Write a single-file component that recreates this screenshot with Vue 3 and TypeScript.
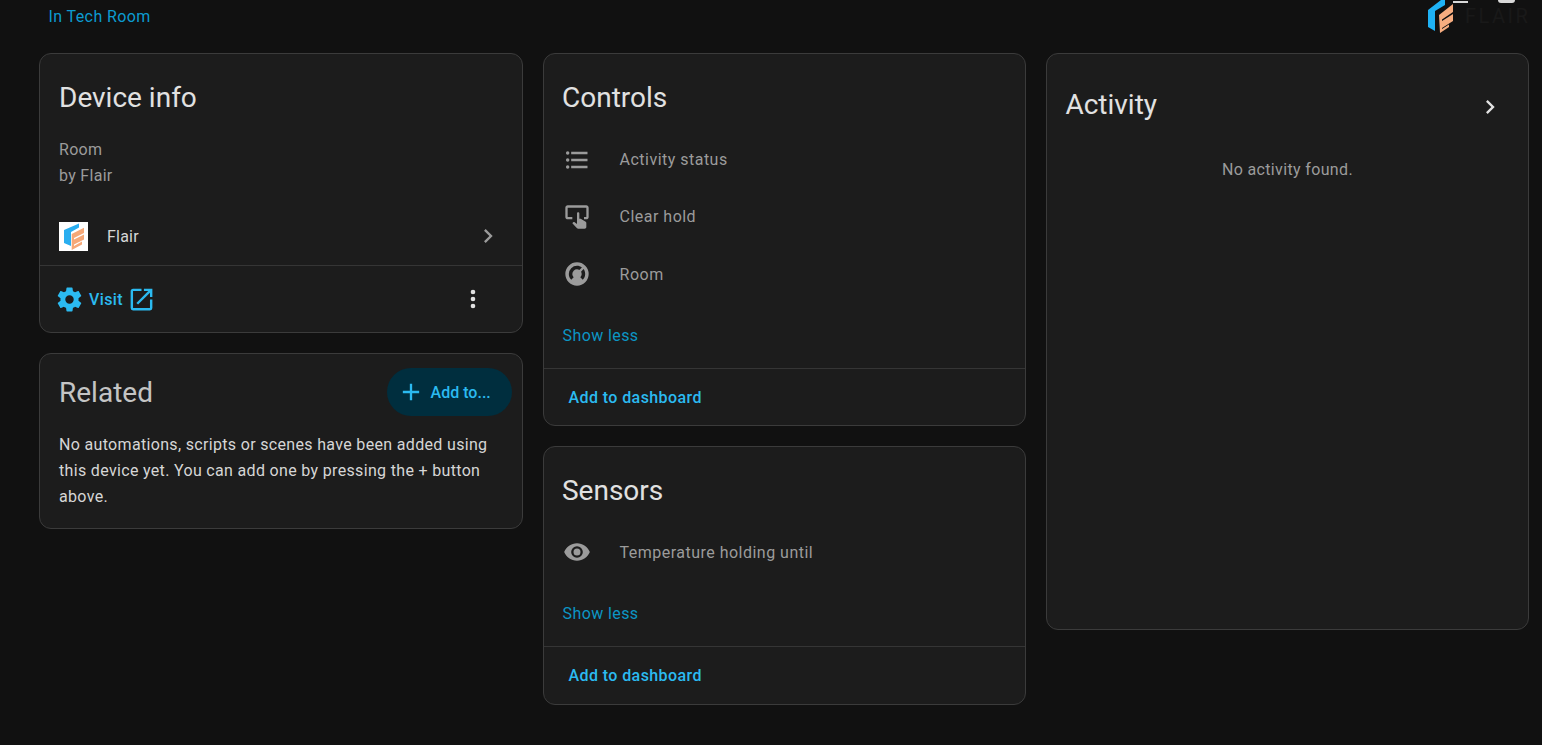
<script setup lang="ts">
const paths = {
  list: 'M7,5H21V7H7V5M7,13V11H21V13H7M4,4.5A1.5,1.5 0 0,1 5.5,6A1.5,1.5 0 0,1 4,7.5A1.5,1.5 0 0,1 2.5,6A1.5,1.5 0 0,1 4,4.5M4,10.5A1.5,1.5 0 0,1 5.5,12A1.5,1.5 0 0,1 4,13.5A1.5,1.5 0 0,1 2.5,12A1.5,1.5 0 0,1 4,10.5M7,19V17H21V19H7M4,16.5A1.5,1.5 0 0,1 5.5,18A1.5,1.5 0 0,1 4,19.5A1.5,1.5 0 0,1 2.5,18A1.5,1.5 0 0,1 4,16.5Z',
  tap: 'M20 2H4C2.9 2 2 2.9 2 4V12C2 13.1 2.9 14 4 14H8V12H4V4H20V12H18V14H20C21.1 14 22 13.1 22 12V4C22 2.9 21.1 2 20 2ZM20 20.5C20 21.3 19.3 22 18.5 22H13C12.6 22 12.3 21.9 12 21.6L8 17.4L8.7 16.6C8.9 16.4 9.2 16.3 9.5 16.3H9.7L12 18V9C12 8.4 12.4 8 13 8S14 8.4 14 9V13.5L15.2 13.6L19.1 15.8C19.7 16 20 16.6 20 17.1V20.5Z',
  thermostat: 'M16.95,16.95L14.83,14.83C15.55,14.1 16,13.1 16,12C16,11.26 15.8,10.57 15.45,10L17.6,7.81C18.5,9.05 19,10.43 19,12C19,13.93 18.22,15.68 16.95,16.95M12,5C13.57,5 14.96,5.5 16.2,6.39L14,8.55C13.43,8.2 12.74,8 12,8A4,4 0 0,0 8,12C8,13.1 8.45,14.1 9.17,14.83L7.05,16.95C5.78,15.68 5,13.93 5,12A7,7 0 0,1 12,5M12,2A10,10 0 0,0 2,12A10,10 0 0,0 12,22A10,10 0 0,0 22,12A10,10 0 0,0 12,2Z',
  eye: 'M12,9A3,3 0 0,0 9,12A3,3 0 0,0 12,15A3,3 0 0,0 15,12A3,3 0 0,0 12,9M12,17A5,5 0 0,1 7,12A5,5 0 0,1 12,7A5,5 0 0,1 17,12A5,5 0 0,1 12,17M12,4.5C7,4.5 2.73,7.61 1,12C2.73,16.39 7,19.5 12,19.5C17,19.5 21.27,16.39 23,12C21.27,7.61 17,4.5 12,4.5Z',
  cog: 'M12,15.5A3.5,3.5 0 0,1 8.5,12A3.5,3.5 0 0,1 12,8.5A3.5,3.5 0 0,1 15.5,12A3.5,3.5 0 0,1 12,15.5M19.43,12.97C19.47,12.65 19.5,12.33 19.5,12C19.5,11.67 19.47,11.34 19.43,11L21.54,9.37C21.73,9.22 21.78,8.95 21.66,8.73L19.66,5.27C19.54,5.05 19.27,4.96 19.05,5.05L16.56,6.05C16.04,5.66 15.5,5.32 14.87,5.07L14.5,2.42C14.46,2.18 14.25,2 14,2H10C9.75,2 9.54,2.18 9.5,2.42L9.13,5.07C8.5,5.32 7.96,5.66 7.44,6.05L4.95,5.05C4.73,4.96 4.46,5.05 4.34,5.27L2.34,8.73C2.21,8.95 2.27,9.22 2.46,9.37L4.57,11C4.53,11.34 4.5,11.67 4.5,12C4.5,12.33 4.53,12.65 4.57,12.97L2.46,14.63C2.27,14.78 2.21,15.05 2.34,15.27L4.34,18.73C4.46,18.95 4.73,19.03 4.95,18.95L7.44,17.94C7.96,18.34 8.5,18.68 9.13,18.93L9.5,21.58C9.54,21.82 9.75,22 10,22H14C14.25,22 14.46,21.82 14.5,21.58L14.87,18.93C15.5,18.67 16.04,18.34 16.56,17.94L19.05,18.95C19.27,19.03 19.54,18.95 19.66,18.73L21.66,15.27C21.78,15.05 21.73,14.78 21.54,14.63L19.43,12.97Z',
  open: 'M14,3V5H17.59L7.76,14.83L9.17,16.24L19,6.41V10H21V3M19,19H5V5H12V3H5C3.89,3 3,3.9 3,5V19A2,2 0 0,0 5,21H19A2,2 0 0,0 21,19V12H19V19Z',
  dots: 'M12,16A2,2 0 0,1 14,18A2,2 0 0,1 12,20A2,2 0 0,1 10,18A2,2 0 0,1 12,16M12,10A2,2 0 0,1 14,12A2,2 0 0,1 12,14A2,2 0 0,1 10,12A2,2 0 0,1 12,10M12,4A2,2 0 0,1 14,6A2,2 0 0,1 12,8A2,2 0 0,1 10,6A2,2 0 0,1 12,4Z',
  chevron: 'M8.59,16.58L13.17,12L8.59,7.41L10,6L16,12L10,18L8.59,16.58Z',
  plus: 'M19,13H13V19H11V13H5V11H11V5H13V11H19V13Z',
}
const controls = [
  { icon: paths.list, label: 'Activity status' },
  { icon: paths.tap, label: 'Clear hold' },
  { icon: paths.thermostat, label: 'Room' },
]
</script>

<template>
  <div class="page">
    <div class="topbar">
      <a class="area">In Tech Room</a>
    </div>
    <div class="brand">
      <span class="stub stub-a"></span>
      <span class="stub stub-b"></span>
      <svg class="brand-logo" viewBox="0 0 28 34" width="28" height="34">
        <polygon points="0,10 13,0 17,0 17,5 7,11 7,31 0,27" fill="#1fb2f5" />
        <polygon points="11,15 25,4 25,12 14,19.5 14,21 25,14 25,21 14,28 14,29 21,24.5 21,27 12,33" fill="#f7ad80" />
      </svg>
      <span class="brand-word">FLAIR</span>
    </div>

    <div class="columns">
      <div class="column">
        <section class="card">
          <h1 class="title">Device info</h1>
          <div class="model">
            <div>Room</div>
            <div>by Flair</div>
          </div>
          <div class="integration">
            <span class="tile">
              <svg viewBox="0 0 29 29" width="29" height="29">
                <polygon points="5,8 20,1.5 20,5.5 12,10 12,24 5,21" fill="#29aef0" />
                <polygon points="12.7,12 25,5.7 25,11 15,16 15,17.5 25,12.5 25,17.5 15,22.5 15,24 23,19.5 23,22.5 12.7,28" fill="#f6a877" />
              </svg>
            </span>
            <span class="integration-name">Flair</span>
            <svg class="chev" viewBox="0 0 24 24" width="28" height="28"><path :d="paths.chevron" /></svg>
          </div>
          <div class="actions">
            <svg class="accent" viewBox="0 0 24 24" width="29" height="29"><path :d="paths.cog" /></svg>
            <span class="visit">Visit</span>
            <svg class="accent" viewBox="0 0 24 24" width="29" height="29"><path :d="paths.open" /></svg>
            <svg class="dots" viewBox="0 0 24 24" width="28" height="28"><path :d="paths.dots" /></svg>
          </div>
        </section>

        <section class="card related">
          <div class="related-head">
            <h1 class="title title-dim">Related</h1>
            <button class="fab">
              <svg viewBox="0 0 24 24" width="28" height="28"><path :d="paths.plus" /></svg>
              <span>Add to...</span>
            </button>
          </div>
          <p class="related-text">No automations, scripts or scenes have been added using this device yet. You can add one by pressing the + button above.</p>
        </section>
      </div>

      <div class="column">
        <section class="card">
          <h1 class="title title-mid">Controls</h1>
          <div class="entities">
            <div v-for="c in controls" :key="c.label" class="entity">
              <svg viewBox="0 0 24 24" width="28" height="28"><path :d="c.icon" /></svg>
              <span>{{ c.label }}</span>
            </div>
          </div>
          <div class="less">Show less</div>
          <div class="dash">Add to dashboard</div>
        </section>

        <section class="card">
          <h1 class="title title-mid">Sensors</h1>
          <div class="entities entities-sensors">
            <div class="entity">
              <svg viewBox="0 0 24 24" width="28" height="28"><path :d="paths.eye" /></svg>
              <span>Temperature holding until</span>
            </div>
          </div>
          <div class="less">Show less</div>
          <div class="dash dash-sensors">Add to dashboard</div>
        </section>
      </div>

      <div class="column">
        <section class="card activity">
          <div class="activity-head">
            <h1 class="title title-activity">Activity</h1>
            <svg class="activity-chev" viewBox="0 0 24 24" width="28" height="28"><path :d="paths.chevron" /></svg>
          </div>
          <p class="empty">No activity found.</p>
        </section>
      </div>
    </div>
  </div>
</template>

<style>
html, body { margin: 0; background: #111111; }
</style>

<style scoped>
.page {
  position: relative;
  height: 745px;
  overflow: hidden;
  box-sizing: border-box;
  background: #111111;
  padding: 0 13px 0 39px;
  font-family: Roboto, "Liberation Sans", sans-serif;
  color: #e1e1e1;
}
.topbar { height: 53px; padding: 4.5px 0 0 9.5px; box-sizing: border-box; }
.area { font-size: 16px; line-height: 24px; letter-spacing: 0.4px; color: #0c9bd0; }
.brand { position: absolute; top: 0; left: 1428px; width: 114px; height: 34px; }
.brand-logo { position: absolute; left: 0; top: 0; }
.brand-word { position: absolute; left: 37px; top: 4px; font-size: 20px; line-height: 24px; color: #191919; letter-spacing: 2.5px; }
.stub { position: absolute; background: #d8d8d8; }
.stub-a { left: 25px; top: 1px; width: 15px; height: 2px; }
.stub-b { left: 70px; top: 0; width: 17px; height: 3px; border-radius: 0 0 3px 3px; }
.columns { display: grid; grid-template-columns: 483.6fr 483.3fr 483.1fr; gap: 20px; align-items: start; }
.column { display: flex; flex-direction: column; gap: 20px; min-width: 0; }
.card {
  background: #1c1c1c;
  border: 1px solid #3b3b3b;
  border-radius: 12px;
  box-sizing: border-box;
  overflow: hidden;
}
.title { margin: 0; padding: 26px 19px 0; font-size: 28px; line-height: 36px; font-weight: 400; color: #e1e1e1; }
.title-mid { padding-left: 18.4px; }
.title-dim { padding: 2px 0 0; color: #c4c4c4; }
.model { padding: 21px 19px 0; font-size: 16px; line-height: 26px; letter-spacing: 0.3px; color: #9b9b9b; }
.integration { display: flex; align-items: center; height: 58px; margin-top: 18px; padding: 0 20px 0 19px; font-size: 16px; letter-spacing: 0.2px; color: #d6d6d6; }
.tile { display: block; width: 29px; height: 29px; background: #ffffff; }
.tile svg { display: block; }
.integration-name { margin-left: 19px; flex: 1; }
.chev path { fill: #9b9b9b; }
.actions { display: flex; align-items: center; height: 67.4px; box-sizing: border-box; border-top: 1px solid #353535; padding: 0 34.5px 0 15px; }
.accent path { fill: #2bbaf0; }
.visit { margin: 0 4px 0 5px; font-size: 16px; font-weight: 500; letter-spacing: 0.4px; color: #2bbaf0; }
.dots { margin-left: auto; }
.dots path { fill: #e1e1e1; }
.related { height: 176px; }
.related-head { display: flex; align-items: center; justify-content: space-between; padding: 14px 10px 0 19px; }
.fab {
  display: flex; align-items: center; gap: 6px;
  width: 125px; height: 48px; padding: 0 0 0 10px; box-sizing: border-box;
  border: 0; border-radius: 24px; background: #002e3e; color: #2bbaf0;
  font: 500 16px Roboto, sans-serif;
}
.fab path { fill: #2bbaf0; }
.related-text { margin: 0; padding: 16px 19px 0; font-size: 16px; line-height: 26px; letter-spacing: 0.33px; color: #d6d6d6; }
.entities { padding: 15px 0 0 8px; }
.entities-sensors { padding-top: 14px; }
.entity { display: flex; align-items: center; height: 57.33px; padding-left: 11px; font-size: 16px; letter-spacing: 0.48px; color: #9b9b9b; }
.entity svg { flex: none; margin-right: 29px; }
.entity path { fill: #9b9b9b; }
.less { padding: 0 19px; height: 65px; line-height: 65px; font-size: 16px; letter-spacing: 0.4px; color: #0c96c4; }
.dash { border-top: 1px solid #353535; padding: 0 25px; height: 56.4px; line-height: 57px; font-size: 16px; font-weight: 500; letter-spacing: 0.4px; color: #2bbaf0; }
.dash-sensors { height: 57.4px; }
.activity { height: 577px; }
.activity-head { display: flex; align-items: center; justify-content: space-between; padding: 33px 24px 0 18.5px; }
.activity-chev { position: relative; top: 2px; }
.activity-chev path { fill: #e1e1e1; }
.title-activity { padding: 0; }
.empty { margin: 0; padding-top: 35px; text-align: center; font-size: 16px; line-height: 24px; letter-spacing: 0.35px; color: #9b9b9b; }
</style>
